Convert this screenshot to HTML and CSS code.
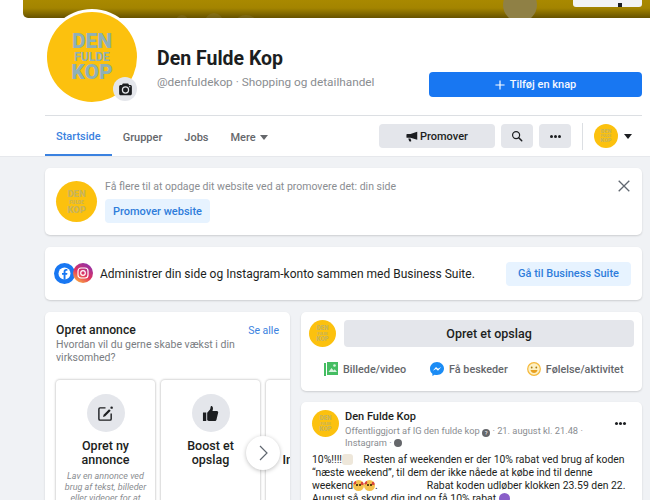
FILE: index.html
```html
<!DOCTYPE html>
<html lang="da">
<head>
  <meta charset="UTF-8" />
  <meta name="viewport" content="width=device-width, initial-scale=1" />
  <title>Den Fulde Kop</title>
  <link rel="stylesheet" href="styles.css">
</head>
<body>
  <header class="page-header">
    <div class="cover">
      <span class="cover-bump bump-a"></span>
      <span class="cover-bump bump-b"></span>
      <span class="cover-bump bump-c"></span>
      <span class="cover-shade"></span>
      <span class="cover-button"><i></i></span>
    </div>

    <div class="profile-avatar">
      <div class="logo logo-large"><b>DEN</b><b class="logo-mid">FULDE</b><b>KOP</b></div>
      <span class="camera-badge">
        <svg width="15" height="15" viewBox="0 0 16 16"><path fill="#1c1e21" d="M5.2 1.500h5.600l1 1.700h1.400c.9 0 1.600.7 1.600 1.600v7.600c0 .9-.7 1.600-1.600 1.600H2.800c-.9 0-1.600-.7-1.600-1.600V4.800c0-.9.7-1.600 1.600-1.600h1.400z"/><circle cx="8" cy="8.500" r="3.300" fill="none" stroke="#e4e6eb" stroke-width="1.300"/><circle cx="12.500" cy="5" r=".7" fill="#e4e6eb"/></svg>
      </span>
    </div>

    <div class="profile-row">
      <div class="profile-text">
        <h1>Den Fulde Kop</h1>
        <p>@denfuldekop · Shopping og detailhandel</p>
      </div>
      <button class="btn-primary">
        <svg width="10" height="10" viewBox="0 0 12 12"><path d="M6 .5v11M.5 6h11" stroke="#fff" stroke-width="1.400"/></svg>
        Tilføj en knap
      </button>
    </div>

    <nav class="tabs">
      <a class="tab active">Startside</a>
      <a class="tab">Grupper</a>
      <a class="tab">Jobs</a>
      <a class="tab">Mere <span class="caret caret-grey"></span></a>
      <div class="tab-actions">
        <button class="btn-grey btn-promote">
          <svg width="12" height="11" viewBox="0 0 16 14"><path fill="#1c1e21" d="M15 .8v10.400l-1.200-.3L6 8.800H1.500C1 8.800.6 8.400.6 7.900V4.400c0-.5.4-.9.9-.9H6L13.800 1.100zM3 9.500h3l1 3.200c.1.400-.2.800-.6.800H5c-.4 0-.7-.2-.8-.6z"/></svg>
          Promover
        </button>
        <button class="btn-grey btn-icon">
          <svg width="12" height="12" viewBox="0 0 16 16"><circle cx="6.800" cy="6.800" r="4.700" fill="none" stroke="#1c1e21" stroke-width="1.600"/><path d="M10.300 10.300l4 4" stroke="#1c1e21" stroke-width="2" stroke-linecap="round"/></svg>
        </button>
        <button class="btn-grey btn-icon">
          <span class="dots"><i></i><i></i><i></i></span>
        </button>
        <span class="tab-divider"></span>
        <div class="logo logo-small"><b>DEN</b><b class="logo-mid">FULDE</b><b>KOP</b></div>
        <span class="caret"></span>
      </div>
    </nav>
  </header>

  <main class="content">
    <section class="card promo-card">
      <div class="logo logo-medium"><b>DEN</b><b class="logo-mid">FULDE</b><b>KOP</b></div>
      <div class="promo-body">
        <p>Få flere til at opdage dit website ved at promovere det: din side</p>
        <button class="btn-soft">Promover website</button>
      </div>
      <svg class="promo-close" width="12" height="12" viewBox="0 0 12 12"><path d="M.7.7l10.600 10.600M11.300.7L.7 11.300" stroke="#606770" stroke-width="1.300"/></svg>
    </section>

    <section class="card suite-card">
      <div class="suite-icons">
        <svg class="suite-fb" width="21" height="21" viewBox="0 0 21 21"><circle cx="10.500" cy="10.500" r="10.500" fill="#1877f2"/><circle cx="10.500" cy="10.500" r="6" fill="#fff"/><path fill="#1877f2" d="M11.500 16.800v-5h1.600l.3-1.900h-1.900V8.800c0-.6.300-1 1-1h.9V6.200c-2.400-.5-3.800.4-3.800 2.400v1.300H8v1.900h1.600v5z"/></svg>
        <svg class="suite-ig" width="20" height="20" viewBox="0 0 20 20"><defs><linearGradient id="ig" x1="0.200" y1="1" x2="0.800" y2="0"><stop offset="0" stop-color="#fdb340"/><stop offset=".45" stop-color="#e0345f"/><stop offset="1" stop-color="#8a2fb0"/></linearGradient></defs><circle cx="10" cy="10" r="10" fill="url(#ig)"/><rect x="5" y="5" width="10" height="10" rx="3" fill="none" stroke="#fff" stroke-width="1.200"/><circle cx="10" cy="10" r="2.300" fill="none" stroke="#fff" stroke-width="1.200"/></svg>
      </div>
      <p>Administrer din side og Instagram-konto sammen med Business Suite.</p>
      <button class="btn-soft btn-suite">Gå til Business Suite</button>
    </section>

    <div class="columns">
      <section class="card ads-card">
        <div class="ads-head">
          <h2>Opret annonce</h2>
          <a>Se alle</a>
        </div>
        <p class="ads-sub">Hvordan vil du gerne skabe vækst i din virksomhed?</p>
        <div class="ads-row">
          <article class="ad">
            <span class="ad-icon">
              <svg width="17" height="17" viewBox="0 0 18 18"><path fill="none" stroke="#1c1e21" stroke-width="1.500" d="M9 3H3.200C2.500 3 2 3.500 2 4.200v10.600c0 .7.500 1.200 1.200 1.200h10.600c.7 0 1.200-.5 1.200-1.200V9"/><path fill="#1c1e21" d="M12.800 4.500l1.700 1.700-5.800 5.800-2.300.6.600-2.300z"/><circle cx="15.500" cy="2.800" r="1.300" fill="#1c1e21"/></svg>
            </span>
            <h3>Opret ny annonce</h3>
            <p>Lav en annonce ved brug af tekst, billeder eller videoer for at</p>
          </article>
          <article class="ad">
            <span class="ad-icon">
              <svg width="17" height="17" viewBox="0 0 18 18"><path fill="#1c1e21" d="M1 8h3.500v9H1zM5.500 8.200l3-3.500c.5-.7.500-1.500.6-2.600 0-.9 1.100-1.300 1.800-.6.900.9 1 2.600.2 4.900h4.600c1 0 1.700.9 1.400 1.900l-1.800 7.200c-.2.800-.9 1.400-1.800 1.400H7.200c-.9 0-1.700-.5-1.700-1.200z"/></svg>
            </span>
            <h3>Boost et opslag</h3>
          </article>
          <article class="ad">
            <span class="ad-icon"></span>
            <h3>&nbsp;<br>Indstillinger</h3>
          </article>
        </div>
        <button class="next-btn">
          <svg width="9" height="16" viewBox="0 0 9 16"><path d="M1 1l7 7-7 7" fill="none" stroke="#606770" stroke-width="1.200"/></svg>
        </button>
      </section>

      <div class="feed">
        <section class="card composer">
          <div class="composer-top">
            <div class="logo logo-composer"><b>DEN</b><b class="logo-mid">FULDE</b><b>KOP</b></div>
            <button class="btn-grey btn-post">Opret et opslag</button>
          </div>
          <div class="composer-actions">
            <span>
              <svg width="14" height="14" viewBox="0 0 14 14"><path fill="#45bd62" d="M0 1h2v13H0zM3 0h11v13H3z"/><path fill="#d8f3df" d="M4.500 10l3-4 2 2.500 1.300-1.300L13 10z"/><circle cx="10.500" cy="3.500" r="1.300" fill="#d8f3df"/></svg>
              Billede/video
            </span>
            <span>
              <svg width="14" height="14" viewBox="0 0 14 14"><path fill="#1b8cf5" d="M7 0C3.100 0 0 2.900 0 6.700c0 2.100.9 3.900 2.400 5.100V14l2.200-1.200c.8.200 1.600.3 2.400.3 3.900 0 7-2.900 7-6.500S10.900 0 7 0z"/><path fill="#fff" d="M2.800 8.700L6 5l2 1.800L11.200 5 8 8.700 6 6.900z"/></svg>
              Få beskeder
            </span>
            <span>
              <svg width="14" height="14" viewBox="0 0 14 14"><circle cx="7" cy="7" r="6.300" fill="#fdf0c4" stroke="#f5b83a" stroke-width="1.200"/><circle cx="4.700" cy="5.500" r=".9" fill="#a87b10"/><circle cx="9.300" cy="5.500" r=".9" fill="#a87b10"/><path d="M3.500 8h7c-.4 2-1.800 3-3.500 3s-3.100-1-3.500-3z" fill="#e8a020"/></svg>
              Følelse/aktivitet
            </span>
          </div>
        </section>

        <section class="card post">
          <div class="post-head">
            <div class="logo logo-post"><b>DEN</b><b class="logo-mid">FULDE</b><b>KOP</b></div>
            <div class="post-meta">
              <h4>Den Fulde Kop</h4>
              <p>Offentliggjort af IG den fulde kop <span class="meta-dot">?</span> · 21. august kl. 21.48 · Instagram · <span class="meta-dot"></span></p>
            </div>
            <span class="dots post-dots"><i></i><i></i><i></i></span>
          </div>
          <p class="post-text">10%!!!!<span class="emoji emoji-glass"></span>&nbsp;&nbsp;&nbsp; Resten af weekenden er der 10% rabat ved brug af koden “næste weekend”, til dem der ikke nåede at købe ind til denne weekend<span class="emoji"></span><span class="emoji"></span>.&nbsp;&nbsp;&nbsp;&nbsp;&nbsp;&nbsp;&nbsp;&nbsp;&nbsp;&nbsp;&nbsp;&nbsp;&nbsp;&nbsp;&nbsp;&nbsp;&nbsp;&nbsp; Rabat koden udløber klokken 23.59 den 22. August så skynd dig ind og få 10% rabat <span class="emoji emoji-star"></span></p>
        </section>
      </div>
    </div>
  </main>
</body>
</html>
```

FILE: styles.css
```css
* {
  box-sizing: border-box;
}

html, body {
  height: 500px;
  overflow: hidden;
}

body {
  margin: 0;
  font-family: Roboto, 'Liberation Sans', sans-serif;
  background: #f0f2f5;
  color: #1c1e21;
}

h1, h2, h3, h4, p {
  margin: 0;
}

button {
  font-family: inherit;
  border: 0;
  display: flex;
  align-items: center;
  justify-content: center;
  white-space: nowrap;
}

.page-header {
  position: relative;
  height: 157px;
  background: #fff;
  border-bottom: 1px solid #e6e8ec;
}

.cover {
  position: relative;
  height: 18px;
  margin-left: 23px;
  overflow: hidden;
  border-bottom-left-radius: 5px;
  background: linear-gradient(#a98900 0%, #a38400 45%, #665200 100%);
}

.cover-bump {
  position: absolute;
  border-radius: 50%;
  background: #8f8045;
}

.bump-a {
  left: 480px;
  top: -12px;
  width: 34px;
  height: 34px;
}

.bump-b {
  left: 182px;
  top: 13px;
  width: 18px;
  height: 18px;
  opacity: .3;
}

.bump-c {
  left: 153px;
  top: 15px;
  width: 12px;
  height: 12px;
  opacity: .25;
}

.cover-shade {
  position: absolute;
  left: 213px;
  top: 15px;
  width: 20px;
  height: 14px;
  border-radius: 50%;
  background: #8f8045;
  opacity: .3;
}

.cover-button {
  position: absolute;
  right: 8px;
  top: -6px;
  width: 69px;
  height: 13px;
  background: #f2f3f5;
  border-radius: 3px;
}

.cover-button i {
  position: absolute;
  left: 45px;
  top: 9px;
  width: 4px;
  height: 4px;
  background: #1c1e21;
}

.profile-avatar {
  position: absolute;
  left: 44px;
  top: 9px;
  width: 96px;
  height: 96px;
  padding: 3px;
  background: #fff;
  border-radius: 50%;
}

.logo {
  display: flex;
  flex-direction: column;
  align-items: center;
  justify-content: center;
  flex: none;
  border-radius: 50%;
  background: #fcc10e;
  color: #8eb0b8;
  line-height: 1;
}

.logo b {
  font-weight: 900;
}

.logo-large {
  width: 90px;
  height: 90px;
  font-size: 21px;
}

.logo-large b {
  line-height: 17px;
}

.logo-large .logo-mid {
  font-size: 12px;
  line-height: 14px;
  font-weight: 700;
}

.logo-small,
.logo-composer,
.logo-post,
.logo-medium {
  color: #c9b45a;
}

.logo-medium {
  width: 41px;
  height: 41px;
  font-size: 9.500px;
}

.logo-medium .logo-mid {
  font-size: 5px;
  line-height: 6px;
}

.logo-small {
  width: 24px;
  height: 24px;
  font-size: 5.500px;
}

.logo-small .logo-mid,
.logo-composer .logo-mid,
.logo-post .logo-mid {
  font-size: 3.500px;
  line-height: 4px;
}

.logo-composer,
.logo-post {
  width: 27px;
  height: 27px;
  font-size: 6.300px;
}

.camera-badge {
  position: absolute;
  right: 3px;
  bottom: 4px;
  width: 24px;
  height: 24px;
  border-radius: 50%;
  background: #e4e6eb;
  display: flex;
  align-items: center;
  justify-content: center;
}

.profile-row {
  display: flex;
  height: 97px;
  padding: 29px 8px 0 157px;
}

.profile-text {
  flex: 1;
}

h1 {
  font-size: 19.500px;
  line-height: 24px;
  font-weight: 700;
}

.profile-text p {
  margin-top: 3px;
  font-size: 11.800px;
  line-height: 16px;
  color: #8a8d91;
}

.btn-primary {
  gap: 5px;
  width: 213px;
  height: 25px;
  margin-top: 25px;
  border-radius: 4px;
  background: #1877f2;
  color: #f4f8fe;
  font-size: 11px;
  font-weight: 500;
}

.tabs {
  display: flex;
  align-items: stretch;
  height: 41px;
  margin: 0 8px 0 45px;
  border-top: 1px solid #dcdfe3;
}

.tab {
  display: flex;
  align-items: center;
  gap: 2px;
  padding: 2px 11px 0;
  font-size: 11px;
  font-weight: 500;
  color: #65676b;
  white-space: nowrap;
}

.tab.active {
  color: #3b82e0;
  border-bottom: 2px solid #3b82e0;
}

.caret {
  width: 0;
  height: 0;
  margin-left: 2px;
  border: 4px solid transparent;
  border-top: 5px solid #1c1e21;
  border-bottom: 0;
}

.caret-grey {
  border-top-color: #65676b;
}

.tab-actions {
  display: flex;
  align-items: center;
  gap: 6px;
  margin-left: auto;
}

.btn-grey {
  height: 24px;
  border-radius: 4px;
  background: #e4e6eb;
  color: #1c1e21;
}

.btn-promote {
  gap: 2px;
  width: 116px;
  font-size: 11px;
  font-weight: 500;
}

.btn-icon {
  width: 32px;
}

.dots {
  display: inline-flex;
  gap: 1px;
}

.dots i {
  width: 3px;
  height: 3px;
  border-radius: 50%;
  background: #1c1e21;
}

.tab-divider {
  width: 1px;
  height: 27px;
  margin: 0 5px;
  background: #dcdfe3;
}

.tab-actions .caret {
  margin: 0 10px 0 0;
}

.content {
  height: 343px;
  overflow: hidden;
  padding: 11px 8px 0 45px;
}

.card {
  background: #fff;
  border-radius: 5px;
  box-shadow: 0 1px 2px rgba(0, 0, 0, .15);
}

.promo-card {
  position: relative;
  display: flex;
  align-items: center;
  gap: 8px;
  height: 67px;
  padding: 0 11px;
}

.promo-body p {
  font-size: 10.500px;
  line-height: 14px;
  color: #8a8d91;
}

.btn-soft {
  height: 24px;
  border-radius: 4px;
  background: #e7f3ff;
  color: #2f7ddb;
  font-size: 11px;
  font-weight: 500;
}

.promo-body .btn-soft {
  width: 105px;
  margin-top: 5px;
}

.promo-close {
  position: absolute;
  right: 12px;
  top: 12px;
}

.suite-card {
  display: flex;
  align-items: center;
  height: 53px;
  margin-top: 12px;
  padding: 0 11px 0 9px;
}

.suite-card p {
  flex: 1;
  font-size: 12px;
  margin-left: 7px;
}

.suite-icons {
  display: flex;
}

.suite-ig {
  margin-left: -2px;
}

.btn-suite {
  width: 125px;
}

.columns {
  display: grid;
  grid-template-columns: 245px 341px;
  gap: 11px;
  margin-top: 12px;
}

.ads-card {
  position: relative;
  height: 220px;
  padding: 11px 11px 0;
  overflow: hidden;
}

.ads-head {
  display: flex;
  justify-content: space-between;
  align-items: center;
}

.ads-head h2 {
  font-size: 12.200px;
  line-height: 14px;
  font-weight: 500;
}

.ads-head a {
  font-size: 10.500px;
  color: #3b82e0;
}

.ads-sub {
  width: 205px;
  margin-top: 1px;
  font-size: 10.500px;
  line-height: 13px;
  color: #7a7d82;
}

.ads-row {
  display: flex;
  gap: 6px;
  margin-top: 16px;
}

.ad {
  flex: none;
  width: 99px;
  height: 160px;
  padding: 14px 5px 0;
  border-radius: 4px;
  text-align: center;
  box-shadow: 0 0 2px 1px rgba(0, 0, 0, .16);
}

.ad-icon {
  display: flex;
  align-items: center;
  justify-content: center;
  width: 38px;
  height: 38px;
  margin: 0 auto;
  border-radius: 50%;
  background: #e4e6eb;
}

.ad h3 {
  margin-top: 7px;
  padding: 0 6px;
  font-size: 12.500px;
  line-height: 14px;
  font-weight: 500;
}

.ad p {
  margin-top: 4px;
  font-size: 9px;
  line-height: 11px;
  font-style: italic;
  color: #8a8d91;
}

.next-btn {
  position: absolute;
  left: 201px;
  top: 124px;
  width: 34px;
  height: 34px;
  border-radius: 50%;
  background: #fff;
  box-shadow: 0 1px 4px rgba(0, 0, 0, .25);
}

.feed {
  display: flex;
  flex-direction: column;
  gap: 11px;
}

.composer {
  height: 79px;
  padding: 8px;
}

.composer-top {
  display: flex;
  align-items: center;
  gap: 8px;
}

.btn-post {
  flex: 1;
  height: 27px;
  font-size: 12.500px;
  font-weight: 500;
}

.composer-actions {
  display: flex;
  gap: 24px;
  margin-top: 15px;
  padding-left: 15px;
}

.composer-actions span {
  display: flex;
  align-items: center;
  gap: 5px;
  font-size: 10.800px;
  font-weight: 500;
  color: #65676b;
}

.composer-actions span:last-child {
  margin-left: -5px;
}

.post {
  height: 140px;
  padding: 8px 11px;
  overflow: hidden;
}

.post-head {
  display: flex;
  gap: 6px;
  align-items: flex-start;
}

.post-meta {
  flex: 1;
}

.post-meta h4 {
  font-size: 11px;
  line-height: 14px;
  font-weight: 500;
}

.post-meta p {
  width: 252px;
  margin-top: 1px;
  font-size: 9.300px;
  line-height: 11px;
  color: #8a8d91;
}

.meta-dot {
  display: inline-block;
  width: 8px;
  height: 8px;
  border-radius: 50%;
  background: #65676b;
  color: #fff;
  font-size: 6px;
  line-height: 8px;
  text-align: center;
  vertical-align: -1px;
}

.post-dots {
  margin: 12px 5px 0 0;
}

.post-text {
  margin-top: 5px;
  font-size: 10.400px;
  line-height: 13px;
}

.emoji {
  display: inline-block;
  width: 11px;
  height: 11px;
  border-radius: 50%;
  background:
    radial-gradient(circle at 15% 25%, #d9483b 0 1.500px, transparent 2px),
    radial-gradient(circle at 85% 30%, #d9483b 0 1.500px, transparent 2px),
    radial-gradient(circle at 35% 45%, #5c4210 0 1px, transparent 1.300px),
    radial-gradient(circle at 65% 45%, #5c4210 0 1px, transparent 1.300px),
    #f4c24d;
  vertical-align: -2px;
}

.emoji-glass {
  background: #eee7da;
  border-radius: 3px;
}

.emoji-star {
  background: #8a5fc9;
}
```
